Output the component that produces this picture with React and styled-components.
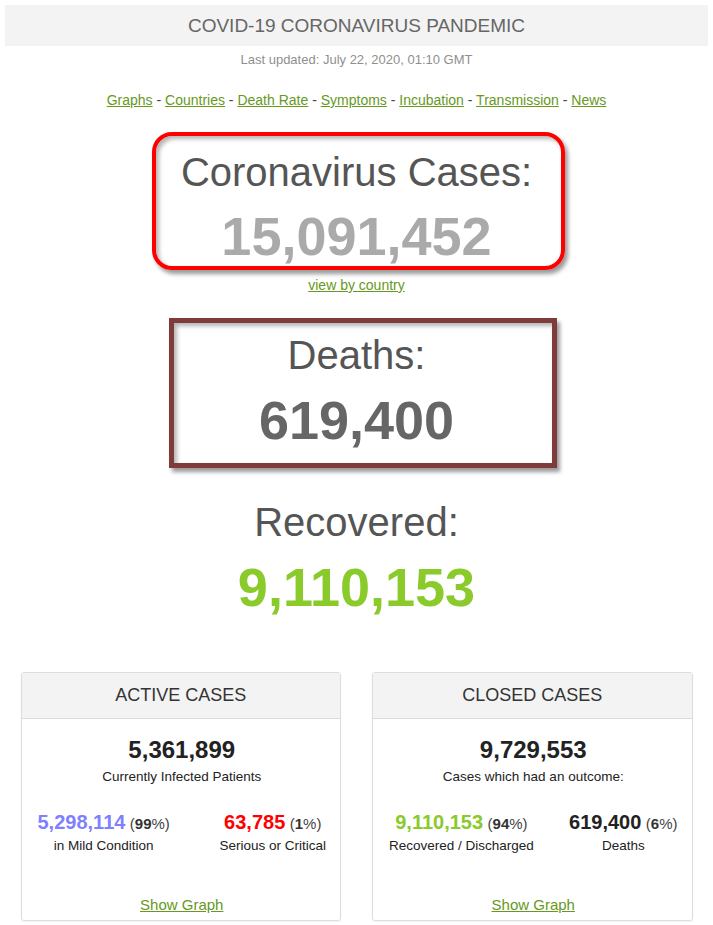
import React from 'react';
import styled, { createGlobalStyle } from 'styled-components';

const GlobalStyle = createGlobalStyle`
body {
  margin: 0;
  padding: 5px;
  background: #fff;
  font-family: "Liberation Sans", Arial, sans-serif;
}
`;

const Page = styled.div`
display: flex;
flex-direction: column;
align-items: center;
`;

const TopBar = styled.div`
width: 100%;
height: 41px;
background: #f3f3f3;
color: #666;
font-size: 19px;
line-height: 41px;
text-align: center;
`;

const Updated = styled.div`
margin-top: 7px;
font-size: 13px;
line-height: 14px;
color: #8f8f8f;
`;

const Nav = styled.div`
margin-top: 25px;
font-size: 14px;
line-height: 16px;
color: #444;
`;

const GreenLink = styled.a`
color: #66991d;
text-decoration: underline;
cursor: pointer;
`;

// boxes are drawn slightly off-centre in the picture while the text stays centred
const CounterBox = styled.div`
display: flex;
flex-direction: column;
align-items: center;
box-sizing: border-box;
width: ${p => p.width}px;
border: ${p => p.border || 'none'};
border-radius: ${p => p.radius || 0}px;
margin-top: ${p => p.top}px;
margin-left: ${p => (p.shift || 0) * 2}px;
padding: ${p => p.padTop || 0}px ${p => (p.shift || 0) * 2}px ${p => p.padBottom || 0}px 0;
box-shadow: ${p => p.border ? 'inset 3px 3px 4px #b5b5b5, 3px 4px 4px #9a9a9a' : 'none'};
`;

const CounterLabel = styled.div`
font-size: 40px;
line-height: 46px;
color: #555;
`;

const CounterNumber = styled.div`
margin-top: ${p => p.gap}px;
font-size: 54px;
line-height: 60px;
font-weight: bold;
color: ${p => p.color};
`;

const ViewLink = styled.div`
margin-top: 7px;
font-size: 14px;
line-height: 16px;
`;

const Cards = styled.div`
margin-top: 55px;
width: 672px;
display: grid;
grid-template-columns: 1fr 1fr;
gap: 31px;
`;

const Card = styled.div`
border: 1px solid #ddd;
border-radius: 3px;
box-shadow: 0 1px 2px rgba(0, 0, 0, 0.06);
display: flex;
flex-direction: column;
`;

const CardHead = styled.div`
height: 45px;
line-height: 44px;
background: #f3f3f3;
border-bottom: 1px solid #ddd;
text-align: center;
font-size: 18px;
color: #333;
`;

const CardBody = styled.div`
padding: 17px 14px 6px 16px;
display: flex;
flex-direction: column;
align-items: center;
`;

const BigNum = styled.div`
font-size: 24px;
line-height: 28px;
font-weight: bold;
color: #222;
`;

const Caption = styled.div`
margin-top: ${p => p.gap || 0}px;
font-size: 13.5px;
line-height: 16px;
color: #222;
`;

const Split = styled.div`
margin-top: 25px;
width: 100%;
display: flex;
justify-content: space-between;
`;

const Stat = styled.div`
display: flex;
flex-direction: column;
align-items: center;
`;

const StatLine = styled.div`
line-height: 24px;
white-space: nowrap;
`;

const StatNum = styled.span`
font-size: 20px;
font-weight: bold;
color: ${p => p.color};
`;

const Pct = styled.span`
font-size: 15px;
color: #444;
b { color: #333; }
`;

const Footer = styled.div`
margin-top: 42px;
font-size: 15px;
line-height: 18px;
`;

const SubStat = ({ num, color, pct, label }) => (
  <Stat>
    <StatLine>
      <StatNum color={color}>{num}</StatNum> <Pct>(<b>{pct}</b>%)</Pct>
    </StatLine>
    <Caption gap={2}>{label}</Caption>
  </Stat>
);

const cards = [
  {
    title: 'ACTIVE CASES',
    total: '5,361,899',
    caption: 'Currently Infected Patients',
    left: { num: '5,298,114', color: '#8080ff', pct: '99', label: 'in Mild Condition' },
    right: { num: '63,785', color: '#ff0000', pct: '1', label: 'Serious or Critical' },
  },
  {
    title: 'CLOSED CASES',
    total: '9,729,553',
    caption: 'Cases which had an outcome:',
    left: { num: '9,110,153', color: '#8aca2b', pct: '94', label: 'Recovered / Discharged' },
    right: { num: '619,400', color: '#222', pct: '6', label: 'Deaths' },
  },
];

const App = () => {
  const links = ['Graphs', 'Countries', 'Death Rate', 'Symptoms', 'Incubation', 'Transmission', 'News'];
  return (
    <Page>
      <GlobalStyle />
      <TopBar>COVID-19 CORONAVIRUS PANDEMIC</TopBar>
      <Updated>Last updated: July 22, 2020, 01:10 GMT</Updated>
      <Nav>
        {links.map((l, i) => (
          <React.Fragment key={l}>
            {i > 0 && ' - '}
            <GreenLink>{l}</GreenLink>
          </React.Fragment>
        ))}
      </Nav>

      <CounterBox width={413} top={24} shift={2} border="4px solid #ff0000" radius={20} padTop={13}>
        <CounterLabel>Coronavirus Cases:</CounterLabel>
        <CounterNumber gap={11} color="#aaa">15,091,452</CounterNumber>
      </CounterBox>
      <ViewLink><GreenLink>view by country</GreenLink></ViewLink>

      <CounterBox width={388} top={25} shift={6} border="5px solid #7f3a3a" padTop={9} padBottom={13}>
        <CounterLabel>Deaths:</CounterLabel>
        <CounterNumber gap={12} color="#666">619,400</CounterNumber>
      </CounterBox>

      <CounterBox width={400} top={31}>
        <CounterLabel>Recovered:</CounterLabel>
        <CounterNumber gap={12} color="#8aca2b">9,110,153</CounterNumber>
      </CounterBox>

      <Cards>
        {cards.map(c => (
          <Card key={c.title}>
            <CardHead>{c.title}</CardHead>
            <CardBody>
              <BigNum>{c.total}</BigNum>
              <Caption gap={5}>{c.caption}</Caption>
              <Split>
                <SubStat {...c.left} />
                <SubStat {...c.right} />
              </Split>
              <Footer><GreenLink>Show Graph</GreenLink></Footer>
            </CardBody>
          </Card>
        ))}
      </Cards>
    </Page>
  );
};

export default App;
